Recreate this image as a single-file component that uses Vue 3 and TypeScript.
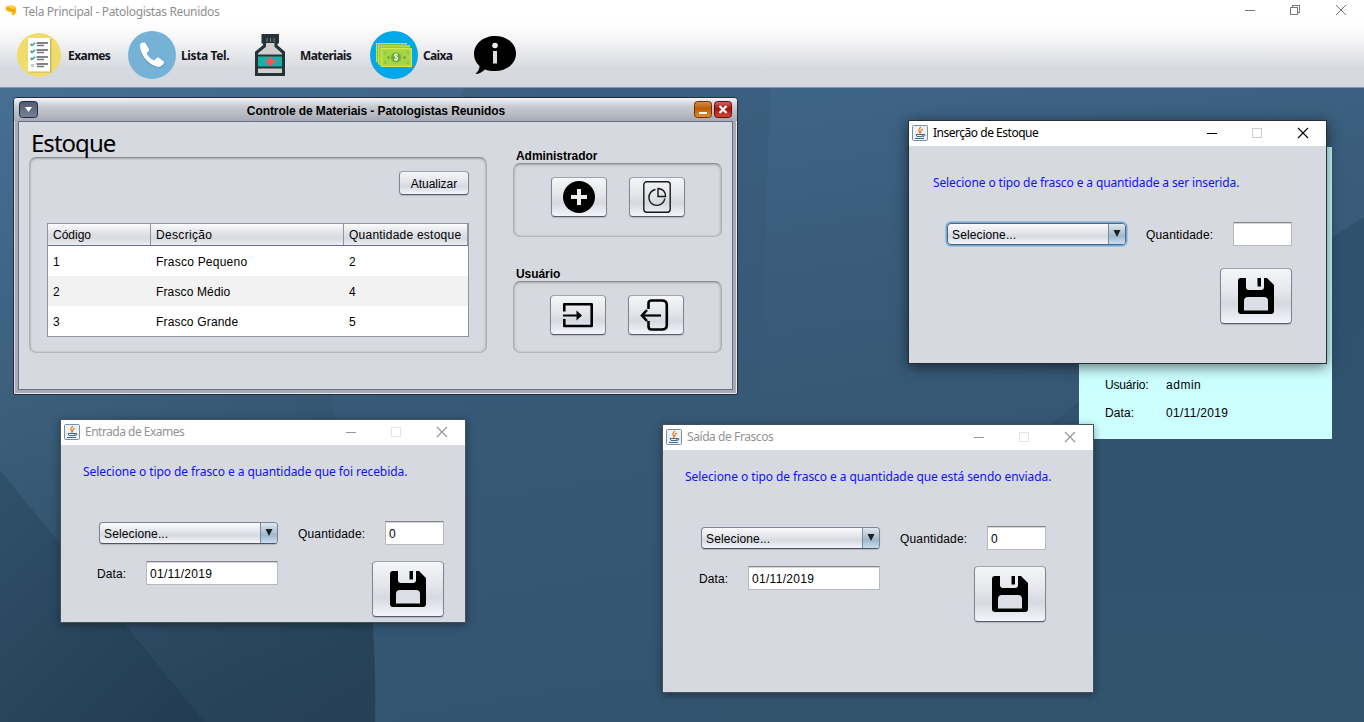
<script setup lang="ts">
interface FormWindow {
  id: string
  title: string
  message: string
  messageWidth: number
  titleWidth: number
  active: boolean
  quantity: string
  date: string | null
}

const windows: FormWindow[] = [
  { id: 'insert', title: 'Inserção de Estoque', titleWidth: 105, message: 'Selecione o tipo de frasco e a quantidade a ser inserida.', messageWidth: 306, active: true, quantity: '', date: null },
  { id: 'entry', title: 'Entrada de Exames', titleWidth: 99, message: 'Selecione o tipo de frasco e a quantidade que foi recebida.', messageWidth: 324, active: false, quantity: '0', date: '01/11/2019' },
  { id: 'output', title: 'Saída de Frascos', titleWidth: 86, message: 'Selecione o tipo de frasco e a quantidade que está sendo enviada.', messageWidth: 366, active: false, quantity: '0', date: '01/11/2019' },
]

const rows = [
  { code: 1, name: 'Frasco Pequeno', width: 91, amount: 2 },
  { code: 2, name: 'Frasco Médio', width: 74, amount: 4 },
  { code: 3, name: 'Frasco Grande', width: 82, amount: 5 },
]

// Spreads a label's letters so that it spans the given width in pixels.
const vFit = {
  mounted(el: HTMLElement, binding: { value: number }) {
    const count = (el.textContent ?? '').trim().length
    const natural = el.getBoundingClientRect().width
    el.style.letterSpacing = `${(binding.value + 0.3 - natural) / count}px`
  },
}
</script>

<template>
  <div class="app">
    <header class="titlebar">
      <svg class="brand" width="14" height="14" viewBox="0 0 14 14">
        <path d="M.5 4Q1 1.500 4 2Q6 .5 8 2Q11 2 11 5Q12 8 10 10Q8 12.500 6.500 10.500Q8 9 6 8Q1 8 .5 4Z" fill="#fbb90d" />
        <path d="M4 2.500Q8 1.500 10 4L8 5L5 4Z" fill="#ffdc31" />
        <path d="M2 5L5 5L7 7L10 6" fill="none" stroke="#f28b05" />
      </svg>
      <span v-fit="196" class="t">Tela Principal - Patologistas Reunidos</span>
      <svg class="controls" width="104" height="14" viewBox="0 0 104 14" fill="none" stroke="#777" shape-rendering="crispEdges">
        <path d="M1 7.500H11" />
        <path d="M46.500 4.500H53.500V11.500H46.500ZM48.500 4V2.500H55.500V9.500H54" />
        <path d="M92 2L102 12M102 2L92 12" shape-rendering="auto" />
      </svg>
    </header>

    <nav class="toolbar">
      <div class="tool exams">
        <svg width="44" height="44" viewBox="0 0 44 44">
          <circle cx="22" cy="22" r="22" fill="#f0dc6c" />
          <path d="M12 6H34.500V39.500H12Z" fill="#c9b85e" />
          <path d="M11 5H33V38.500H11Z" fill="#fff" />
          <path d="M19.500 10H31M19.500 17H31M19.500 24H31M19.500 31H31" stroke="#555b5f" stroke-width="1.400" />
          <path d="M20 12.500H27M20 19.500H27M20 26.500H27M20 33.500H27" stroke="#777" stroke-width="1.400" />
          <path d="M13.500 11l1.500 1.300 3-2.500M13.500 18l1.500 1.300 3-2.500M13.500 25l1.500 1.300 3-2.500" fill="none" stroke="#36a69e" stroke-width="1.700" />
          <path d="M14 31H17V34H14Z" fill="#c9cbca" />
        </svg>
        <b v-fit="42" class="t">Exames</b>
      </div>
      <div class="tool phone">
        <svg width="48" height="48" viewBox="0 0 48 48">
          <circle cx="24" cy="24" r="24" fill="#76b2d6" />
          <path d="M13 15 C14 12 18 11 19 13 L22 19 C22 21 19 21 19 23 C19 25 25 31 27 30 L30 28 L36 31 C38 33 34 37 31 37 C20 36 11 24 13 15Z" fill="#6298b9" />
          <path d="M12 14 C13 11 17 11 18 13 L21 18 C22 21 18 21 19 23 C20 26 25 30 27 29 C28 27 30 26 31 27 L35 30 C38 31 34 36 30 36 C20 34 12 23 12 14Z" fill="#fff" />
        </svg>
        <b v-fit="48" class="t">Lista Tel.</b>
      </div>
      <div class="tool bottle">
        <svg width="32" height="42" viewBox="0 0 32 42">
          <path d="M9 1.500H23.500V8H22V12L29.500 18.500V40.500H2.500V18.500L10.500 12V8H9Z" fill="#cfcfd0" stroke="#263238" stroke-width="3" />
          <path d="M8 .5H24.500V9H8Z" fill="#263238" />
          <path d="M13 4V8M16.500 4V8M20 4V8" stroke="#78838a" />
          <path d="M3 21.500H29V33.500H3Z" fill="#1cada4" stroke="#263238" stroke-width="2" />
          <path d="M16.500 23V32M12 27.500H21" stroke="#ff5252" stroke-width="2.800" />
        </svg>
        <b v-fit="51" class="t">Materiais</b>
      </div>
      <div class="tool cash">
        <svg width="48" height="48" viewBox="0 0 48 48">
          <circle cx="24" cy="24" r="24" fill="#04a7e8" />
          <path d="M6 12H37V31H6Z" fill="#8ac43f" />
          <path d="M6 12.500H37M6.500 12V31" stroke="#c1df49" />
          <path d="M8 14H40V34H8Z" fill="#94cb42" /><path d="M8 15H40M8.500 15V33" stroke="#c8df46" />
          <path d="M11 17.500H41.500V35.500H11Z" fill="#aada43" stroke="#d6e84e" />
          <path d="M14 20H39V33H14Z" fill="#8dc641" />
          <path d="M17 20L14 24V29L17 33H36L39 29V24L36 20Z" fill="#a5d543" />
          <circle cx="26" cy="26.500" r="5" fill="#6faa38" />
          <path d="M28 24Q24 22 24.500 25Q29 26 27.500 28.500Q25 30 24 28M26 22.500V30" fill="none" stroke="#fff" />
          <path d="M17 26.500H20M33 26.500H36" stroke="#6faa38" stroke-width="2" />
        </svg>
        <b v-fit="29" class="t">Caixa</b>
      </div>
      <div class="tool about">
        <svg width="42" height="38" viewBox="0 0 42 38">
          <path d="M21 0C33 0 42 7.500 42 17.500S33 35 21 35C17 35 14 34.500 11 33.500C8 36 5 38 1.500 38C4 35.500 5.500 33 5.500 30C2 27 0 23 0 18C0 8 9 0 21 0Z" fill="#000" />
          <circle cx="21" cy="9.500" r="2.800" fill="#eee" /><path d="M21 15V27.500" stroke="#ddd" stroke-width="4" />
        </svg>
      </div>
    </nav>

    <main class="desktop">
      <svg class="wallpaper" width="1364" height="634" viewBox="0 88 1364 634">
        <defs>
          <linearGradient id="base" x1="0" y1="0" x2=".35" y2="1">
            <stop offset="0" stop-color="#426b8e" /><stop offset=".4" stop-color="#3a5d7c" /><stop offset="1" stop-color="#31526b" />
          </linearGradient>
          <linearGradient id="left" x1="0" y1="0" x2=".3" y2="1">
            <stop offset="0" stop-color="#476f94" /><stop offset=".5" stop-color="#3a5d79" /><stop offset="1" stop-color="#2a475f" />
          </linearGradient>
          <linearGradient id="low" x1="0" y1="0" x2=".8" y2="1">
            <stop offset="0" stop-color="#30516a" /><stop offset="1" stop-color="#233d54" />
          </linearGradient>
          <linearGradient id="right" x1="0" y1="0" x2="0" y2="1">
            <stop offset="0" stop-color="#2f516e" /><stop offset="1" stop-color="#32546d" />
          </linearGradient>
        </defs>
        <path d="M0 88H1364V722H0Z" fill="url(#base)" />
        <path d="M0 88H465L500 120L330 395Q378 560 375 722H0Z" fill="url(#left)" />
        <path d="M465 88H770L760 390L790 722H375Q378 560 330 395Z" fill="#365975" opacity=".45" />
        <path d="M0 470L205 722H0Z" fill="url(#low)" />
        <path d="M205 722L60 540L100 500L372 605Q376 665 375 722Z" fill="url(#low)" opacity=".65" />
        <path d="M1364 217L1093 390L727 690L715 722H1364Z" fill="url(#right)" />
      </svg>

      <aside class="session">
        <div class="pair"><span v-fit="43" class="t">Usuário:</span><span v-fit="35" class="t">admin</span></div>
        <div class="pair"><span v-fit="29" class="t">Data:</span><span v-fit="62" class="t">01/11/2019</span></div>
      </aside>

      <section class="frame">
        <div class="frame-title">
          <svg class="menu" width="19" height="18" viewBox="0 0 19 18">
            <defs><linearGradient id="mg" x2="0" y2="1"><stop stop-color="#50586c" /><stop offset="1" stop-color="#788296" /></linearGradient></defs>
            <rect x=".5" y=".5" width="18" height="16" rx="3" fill="url(#mg)" stroke="#232c40" /><path d="M6 6H13L9.500 11Z" fill="#fff" />
          </svg>
          <b v-fit="258" class="t">Controle de Materiais - Patologistas Reunidos</b>
          <svg class="buttons" width="39" height="18" viewBox="0 0 39 18">
            <defs>
              <linearGradient id="og" x2="0" y2="1"><stop stop-color="#d98c4c" /><stop offset=".45" stop-color="#bd5c08" /><stop offset="1" stop-color="#e68e28" /></linearGradient>
              <linearGradient id="rg" x2="0" y2="1"><stop stop-color="#cc6b67" /><stop offset=".45" stop-color="#a31610" /><stop offset="1" stop-color="#d54437" /></linearGradient>
            </defs>
            <rect x=".5" y=".5" width="17" height="16" rx="3" fill="url(#og)" stroke="#733004" /><path d="M5 12H13" stroke="#fff" stroke-width="2" />
            <rect x="20.500" y=".5" width="17" height="16" rx="3" fill="url(#rg)" stroke="#650d0b" /><path d="M25.500 5L32.500 12M32.500 5L25.500 12" stroke="#fff" stroke-width="2.200" />
          </svg>
        </div>
        <div class="frame-body">
          <div class="stock">
            <h1><span v-fit="84" class="t">Estoque</span></h1>
            <div class="panel stock-panel">
              <button class="btn refresh"><span v-fit="46" class="t">Atualizar</span></button>
              <div class="table">
                <div class="row head">
                  <span>Código</span><span><span v-fit="56" class="t">Descrição</span></span><span><span v-fit="112" class="t">Quantidade estoque</span></span>
                </div>
                <div v-for="r in rows" :key="r.code" class="row">
                  <span>{{ r.code }}</span><span><span v-fit="r.width" class="t">{{ r.name }}</span></span><span>{{ r.amount }}</span>
                </div>
              </div>
            </div>
          </div>
          <div class="actions">
            <b class="group-label"><span v-fit="81" class="t">Administrador</span></b>
            <div class="panel admin-panel">
              <button class="btn icon-btn">
                <svg width="32" height="32" viewBox="0 0 32 32"><circle cx="16" cy="16" r="16" /><path d="M16 8V24M8 16H24" stroke="#eee" stroke-width="4" /></svg>
              </button>
              <button class="btn icon-btn">
                <svg width="32" height="32" viewBox="0 0 32 32" fill="none" stroke="#181818" stroke-width="1.400">
                  <rect x="2.800" y=".8" width="26.400" height="30.400" rx="3" /><path d="M14.500 8.500A8 8 0 1 0 23.800 17.500M17 7.500V15.500H24.500Q24.500 8 17 7.500Z" />
                </svg>
              </button>
            </div>
            <b class="group-label second"><span v-fit="44" class="t">Usuário</span></b>
            <div class="panel user-panel">
              <button class="btn icon-btn">
                <svg width="32" height="32" viewBox="0 0 32 32" fill="none" stroke="#000" stroke-width="2.600">
                  <path d="M2.300 12.500V5.300H29.700V27H2.300V20" stroke-linejoin="round" /><path d="M1 16.500H17" stroke-width="2" /><path d="M14.500 11.500L20 16.500L14.500 21.500Z" fill="#000" stroke="none" />
                </svg>
              </button>
              <button class="btn icon-btn">
                <svg width="32" height="32" viewBox="0 0 32 32" fill="none" stroke="#000" stroke-width="2.600">
                  <path d="M8.500 10V4.500Q8.500 1.500 11.500 1.500H22Q26.800 1.500 26.800 6V26Q26.800 30.500 22 30.500H11.500Q8.500 30.500 8.500 27.500V22" /><path d="M21 16.500H3" stroke-width="2.200" /><path d="M7 11L2 16.500L7 22" />
                </svg>
              </button>
            </div>
          </div>
        </div>
      </section>

      <section v-for="w in windows" :key="w.id" class="window" :class="[w.id, { active: w.active }]">
        <div class="window-title">
          <svg class="java" width="16" height="16" viewBox="0 0 16 16">
            <rect x=".5" y=".5" width="15" height="15" rx="1" fill="#edf2f6" stroke="#7790a5" />
            <path d="M9 2Q5.500 5 7.500 6.500L8 9M11 4Q7.500 6 9 8" fill="none" stroke="#ef7b22" stroke-width="1.200" />
            <path d="M4 9.500H11L10.500 11.500H5ZM11 9.500Q14 9 12.500 11L10.500 11.500M3 13.500H12" fill="none" stroke="#426b8d" />
          </svg>
          <span v-fit="w.titleWidth" class="t">{{ w.title }}</span>
          <svg class="controls" width="104" height="12" viewBox="0 0 104 12" fill="none" stroke="currentColor">
            <path d="M1 6.500H11" shape-rendering="crispEdges" />
            <rect class="disabled" x="46.500" y="1.500" width="9" height="9" />
            <path d="M92 1L102 11M102 1L92 11" stroke-width="1.100" />
          </svg>
        </div>
        <div class="window-body">
          <p class="message"><span v-fit="w.messageWidth" class="t">{{ w.message }}</span></p>
          <div class="choice">
            <div class="combo"><span v-fit="64" class="t">Selecione...</span><i><svg width="8" height="8" viewBox="0 0 8 8"><path d="M.5 0H7.500L4 7Z" fill="#1c1f22" /></svg></i></div>
            <label><span v-fit="67" class="t">Quantidade:</span></label>
            <div class="field quantity">{{ w.quantity }}</div>
          </div>
          <div class="bottom">
            <template v-if="w.date">
              <label><span v-fit="29" class="t">Data:</span></label>
              <div class="field date"><span v-fit="62" class="t">{{ w.date }}</span></div>
            </template>
            <button class="btn save">
              <svg width="36" height="36" viewBox="0 0 36 36">
                <path d="M3 0H8V9Q8 12 11 12H23Q26 12 26 9V0H29L36 7V33Q36 36 33 36H3Q0 36 0 33V3Q0 0 3 0Z" /><path d="M19.500 0H23V8.500H19.500Z" />
                <path d="M6 32.500V23Q6 19 10 19H26Q30 19 30 23V32.500Z" fill="#dcdfe6" />
              </svg>
            </button>
          </div>
        </div>
      </section>
    </main>
  </div>
</template>

<style>
html, body { margin: 0; overflow: hidden; }
</style>

<style scoped>
* { box-sizing: border-box; }
.app { width: 1364px; height: 722px; display: flex; flex-direction: column; font: 12px/16px "Liberation Sans", Arial, sans-serif; color: #000; }
.t { display: inline-block; white-space: nowrap; }
svg { display: block; flex: none; }
button { font: inherit; color: inherit; }
.titlebar { height: 23px; flex: none; display: flex; align-items: center; padding-left: 5px; background: #fff; color: #8f8f8f; font-family: "Noto Sans", sans-serif; }
.brand { margin: -1px 4px 0 0; }
.titlebar .t { line-height: 22px; }
.titlebar .controls { margin: -4px 16px 0 auto; }
.toolbar { height: 65px; flex: none; display: flex; align-items: center; padding-left: 17px; border-bottom: 1px solid #8c93a3; background: linear-gradient(#fafbfa 0%, #fff 4%, #f3f3f5 30%, #dcdee3 63%, #d6d9df 70%, #d6d9df 100%); font-family: "Noto Sans", sans-serif; }
.tool { height: 48px; display: flex; align-items: center; color: #15151c; }
.tool b { line-height: 16px; margin-top: 2px; }
.exams { width: 111px; gap: 7px; }
.phone { width: 126px; gap: 5px; }
.bottle { width: 116px; gap: 14px; }
.cash { width: 104px; gap: 5px; }
.desktop { position: relative; height: 634px; overflow: hidden; }
.wallpaper { width: 1364px; }
.session { position: absolute; left: 1079px; top: 59px; width: 253px; height: 292px; background: #cff; padding: 230px 0 0 26px; display: flex; flex-direction: column; gap: 12px; }
.pair { display: grid; grid-template-columns: 61px 1fr; justify-items: start; }
.frame { position: absolute; left: 13px; top: 9px; width: 725px; height: 298px; border: 1px solid #292c38; border-radius: 4px 4px 2px 2px; background: #a6abb6; box-shadow: inset 1px 0 #dadde2, inset -1px -1px #e8e9ed; }
.frame-title { height: 23px; display: grid; grid-template-columns: 39px 1fr 39px; padding: 3px 4px 0 5px; border-radius: 3px 3px 0 0; background: linear-gradient(#f4f5f7, #c9ccd3 35%, #a6aab4); }
.frame-title b { justify-self: center; line-height: 20px; }
.frame-body { margin: 0 4px; height: 269px; border: 1px solid #687085; background: #d6d9df; display: flex; padding: 0 10px; }
.stock { width: 458px; }
h1 { margin: 0; height: 35px; padding: 8px 0 0 2px; font: 24px/26px "Noto Sans", sans-serif; }
.panel { border: 1px solid #a9acb2; border-top-color: #8a8e96; border-bottom-color: #b4b7bb; border-radius: 7px; box-shadow: inset 0 1px 2px #a8abb1, inset 1px 0 2px #c0c3c8, inset -1px 0 2px #c0c3c8; }
.stock-panel { height: 196px; padding: 13px 17px; display: flex; flex-direction: column; }
.btn { flex: none; padding: 0; border: 1px solid #81858d; border-top-color: #a0a3a9; border-bottom-color: #565b66; border-radius: 4px; background: linear-gradient(#f5f6f8, #e3e5ea 45%, #d6d9e0 65%, #f3f4fc); box-shadow: 0 1px 1px #b4b8bf; display: flex; align-items: center; justify-content: center; }
.refresh { align-self: flex-end; width: 70px; height: 24px; padding-top: 1px; }
.table { margin-top: 28px; height: 114px; border: 1px solid #8f95a1; background: #fff; }
.row { display: grid; grid-template-columns: 103px 193px 1fr; height: 30px; line-height: 32px; }
.row > span { padding-left: 5px; }
.row:nth-child(3) { background: #f2f2f2; }
.row.head { height: 22px; line-height: 23px; background: linear-gradient(#fbfbfc, #dfe1e6 45%, #d7dae1 70%, #eceef6); border-bottom: 1px solid #687085; }
.head > span { border-right: 1px solid #8f949e; height: 21px; }
.actions { width: 209px; margin-left: 26px; }
.group-label { display: block; height: 41px; padding: 26px 0 0 3px; line-height: 16px; }
.group-label.second { height: 44px; padding-top: 29px; }
.admin-panel { height: 74px; padding: 13px 37px; display: flex; gap: 22px; }
.user-panel { height: 72px; padding: 13px 36px; display: flex; gap: 22px; }
.icon-btn { width: 56px; height: 40px; }
.window { position: absolute; border: 1px solid #45525d; background: #d6d9df; box-shadow: 0 2px 8px rgba(0, 0, 0, .38); color: #000; }
.window.active { border-color: #262f39; box-shadow: 0 3px 13px rgba(0, 0, 0, .55); }
.insert { left: 908px; top: 32px; width: 419px; height: 244px; }
.entry { left: 60px; top: 331px; width: 406px; height: 204px; }
.output { left: 662px; top: 336px; width: 432px; height: 269px; }
.window-title { height: 25px; background: #fff; display: flex; align-items: center; padding-left: 3px; color: #939393; font-family: "Noto Sans", sans-serif; }
.active .window-title { color: #000; }
.java { margin-top: -1px; }
.window-title .t { margin-left: 5px; line-height: 16px; margin-top: -1px; }
.window-title .controls { margin: -1px 16px 0 auto; }
.disabled { stroke: #e6e6e6; }
.active .disabled { stroke: #ccc; }
.message { margin: 0; height: 76px; padding: 19px 0 0 22px; color: #1111f4; font-family: "Noto Sans", sans-serif; line-height: 16px; }
.insert .message { padding: 29px 0 0 24px; }
.choice { display: flex; height: 24px; align-items: center; padding-left: 38px; }
.combo { width: 179px; height: 22px; padding-left: 4px; display: flex; align-items: center; justify-content: space-between; border: 1px solid #7c8494; border-bottom-color: #4b535f; border-radius: 4px; overflow: hidden; background: linear-gradient(#fbfbfc, #e2e4e9 45%, #d6d9e0 60%, #f4f5fb); box-shadow: 0 1px 1px #b4b8bf; }
.combo .t { margin-top: 2px; }
.active .combo { border-color: #45698c; box-shadow: 0 0 0 1.500px #75a6d1; }
.combo i { align-self: stretch; width: 17px; display: flex; align-items: center; justify-content: center; border-left: 1px solid #6f8ca5; background: linear-gradient(#e0e8ef, #a9bfd1 50%, #a0b8cc 60%, #c6dff1); }
.choice label { margin: 2px 0 0 20px; width: 87px; }
.field { height: 24px; padding-left: 3px; line-height: 24px; border: 1px solid #b5b8bc; border-top-color: #84888d; background: #fff; box-shadow: inset 0 1px #d5d5d5; }
.quantity { width: 59px; }
.bottom { display: flex; padding: 16px 21px 0 36px; }
.insert .bottom { padding: 22px 34px 0 0; }
.output .bottom { padding-right: 47px; }
.bottom label { width: 49px; line-height: 27px; }
.date { width: 132px; }
.save { width: 72px; height: 56px; margin-left: auto; }
</style>
